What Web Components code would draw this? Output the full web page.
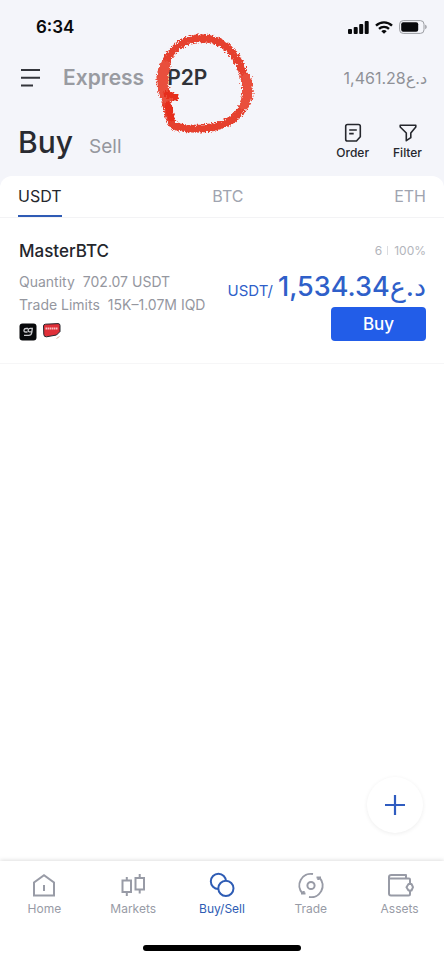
<!DOCTYPE html>
<html lang="en">
<head>
<meta charset="utf-8">
<meta name="viewport" content="width=device-width, initial-scale=1">
<title>P2P</title>
<style>
  body { margin: 0; background: #fff; font-family: Inter, "Liberation Sans", "DejaVu Sans", sans-serif; color: #24262c; }
</style>
</head>
<body>
<p2p-app></p2p-app>
<script>
const base = `<style>
*{box-sizing:border-box}
button,a{font:inherit;color:inherit;background:none;border:0;padding:0;margin:0;text-decoration:none;cursor:pointer;white-space:nowrap}
svg{display:block;fill:none;stroke:currentColor}
</style>`;
function define(name, html) {
  const t = document.createElement('template');
  t.innerHTML = base + html;
  customElements.define(name, class extends HTMLElement {
    constructor() {
      super();
      this.attachShadow({ mode: 'open' }).appendChild(t.content.cloneNode(true));
    }
  });
}

define('status-bar', `<style>
:host{display:flex;justify-content:space-between;align-items:center;height:54px;padding:0 17px 0 36px;color:#08090b}
time{font-size:17px;font-weight:600;line-height:24px}
div{display:flex;align-items:center;gap:6px}
</style>
<time>6:34</time>
<div>
<svg width="21" height="13" viewBox="0 0 21 13" style="fill:currentColor;stroke:none" aria-hidden="true"><rect x="0" y="8" width="4" height="5" rx="1"/><rect x="5.7" y="6" width="4" height="7" rx="1"/><rect x="11.2" y="3" width="4" height="10" rx="1"/><rect x="16.7" y="0" width="4" height="13" rx="1"/></svg>
<svg width="18" height="13" viewBox="0 0 18 13" stroke-width="2.3" aria-hidden="true"><path d="M1 4.6a11.4 11.4 0 0 1 16 0M4 7.9a7.2 7.2 0 0 1 10 0"/><path d="M9 12.8 6.3 10.2a4 4 0 0 1 5.4 0z" fill="currentColor" stroke="none"/></svg>
<svg width="28" height="14" viewBox="0 0 28 14" aria-hidden="true"><rect x=".6" y=".6" width="24.4" height="12.8" rx="3.6" stroke="#9b9da2"/><rect x="2.2" y="2.2" width="17" height="9.6" rx="2" fill="currentColor" stroke="none"/><path d="M26.300 4.800c1.700.6 1.700 3.800 0 4.400z" fill="#8b8d92" stroke="none"/></svg>
</div>`);

define('hand-circle', `<style>
:host{position:absolute;left:-18px;top:-35px;width:100px;height:106px;pointer-events:none}
</style>
<svg width="100" height="106" viewBox="150 29 100 106" style="overflow:visible" aria-hidden="true">
<defs><filter id="crayon" x="-20%" y="-20%" width="140%" height="140%"><feTurbulence type="fractalNoise" baseFrequency=".55" numOctaves="2" seed="4" result="n"/><feDisplacementMap in="SourceGraphic" in2="n" scale="6" xChannelSelector="R" yChannelSelector="G"/><feGaussianBlur stdDeviation=".5"/></filter></defs>
<g filter="url(#crayon)" stroke-linecap="round" stroke-linejoin="round">
<path d="M220 42C206 36 186 36 174 51C161 66 159 82 164 94C169 105 168 118 175 126C190 130 211 130 227 123C244 115 250 99 246 80C243 65 234 49 220 42" stroke="#e5412f" stroke-width="8"/>
<path d="M166 66C162 77 163 88 168 98" stroke="#e9503c" stroke-width="11"/>
<path d="M168 94L176 97M169 105L172 118" stroke="#e62e1b" stroke-width="7"/>
<path d="M247 78C250 90 249 99 245 105" stroke="#e9503c" stroke-width="10"/>
</g></svg>`);

define('top-nav', `<style>
:host{display:flex;align-items:center;height:48px;padding:0 17px 0 21px}
.menu{width:20px;margin-right:22px;color:#33353b}
nav{display:flex;gap:23px;font-size:21px;font-weight:600;line-height:28px;color:#999ba1}
.on{position:relative;color:#303238}
.bal{margin-left:auto;font-size:16px;line-height:24px;color:#8f9197}
</style>
<button class="menu" aria-label="Menu"><svg width="20" height="18" viewBox="0 0 20 18" stroke-width="2"><path d="M0 1h19M0 8.700h19M0 16.500h12"/></svg></button>
<nav><button>Express</button><button class="on">P2P<hand-circle></hand-circle></button></nav>
<bdi class="bal" dir="ltr">د.ع1,461.28</bdi>`);

define('side-switch', `<style>
:host{display:flex;align-items:center;height:74px;padding:5px 22px 0 18px}
.side{display:flex;align-items:baseline;gap:16px;flex:1}
.buy{font-size:30px;line-height:40px;font-weight:500;color:#292b31}
.sell{font-size:19px;color:#95979e}
.tools{display:flex;gap:24px}
.tools button{display:flex;flex-direction:column;align-items:center;gap:3px;font-size:12px;font-weight:500;line-height:14px;color:#25272d}
</style>
<div class="side"><button class="buy">Buy</button><button class="sell">Sell</button></div>
<div class="tools">
<button><svg width="18" height="20" viewBox="0 0 18 20" stroke-width="1.6" stroke-linejoin="round"><path d="M3.500 1.500h11q1.800 0 1.800 1.800v10.500l-3.800 4.200h-9q-1.800 0-1.800-1.800V3.300q0-1.800 1.800-1.800zM5.200 7h7.600M5.200 10.600h4.500"/></svg>Order</button>
<button><svg width="18" height="20" viewBox="0 0 18 20" stroke-width="1.6" stroke-linejoin="round"><path d="M1.200 2.300h15.600v1.700l-5 6v4.700l-4.500 3V10L1.200 4z"/></svg>Filter</button>
</div>`);

define('coin-tabs', `<style>
:host{display:flex;justify-content:space-between;height:42px;padding:0 18px;background:#fff;border-bottom:1px solid #f3f3f5;border-radius:12px 12px 0 0;font-size:16px;color:#a0a4b0}
button{border-bottom:2px solid transparent;line-height:38px;height:41px}
.on{color:#25272d;border-color:#2f5bb5}
</style>
<button class="on">USDT</button><button>BTC</button><button>ETH</button>`);

define('offer-card', `<style>
:host{display:flex;justify-content:space-between;padding:21px 18px 22px 19px;border-bottom:1px solid #f6f6f7}
h2{margin:0 0 7px;font-size:17px;line-height:24px;font-weight:500;color:#24262c}
p{margin:0;font-size:14px;line-height:23px;color:#95979f;white-space:nowrap}
p span{margin-left:8px}
.pay{display:flex;gap:6px;margin-top:7px}
.right{display:flex;flex-direction:column;align-items:flex-end}
.stat{font-size:12px;line-height:24px;color:#b3b5bc}
.stat i{display:inline-block;width:1px;height:9px;margin:0 6px 0 5px;background:#dcdde1}
.price{display:flex;align-items:baseline;gap:5px;height:44px;line-height:48px;color:#2f5fc9;white-space:nowrap}
.price small{font-size:15px}
.price bdi{font-size:27px;font-weight:500}
.go{width:95px;height:34px;border-radius:4px;background:#225de8;color:#fff;font-size:17px;font-weight:500}
</style>
<section>
<h2><slot name="name"></slot></h2>
<p>Quantity<span><slot name="qty"></slot></span></p>
<p>Trade Limits<span><slot name="limits"></slot></span></p>
<div class="pay">
<svg width="18" height="18" viewBox="0 0 18 18" aria-hidden="true"><rect x=".5" y=".5" width="17" height="17" rx="3" fill="#08090b" stroke="none"/><path d="M9 5.500H7Q5.200 5.500 5 7.200T6.500 9H8.500M13.300 5.300H11.200Q9.400 5.300 9.200 7T10.700 8.800H12.900ZM13.300 5.300 12.700 9.800Q12.200 12.300 9.800 12.300H5" stroke="#c9c9cc" stroke-width="1.300"/></svg>
<svg width="18" height="18" viewBox="0 0 18 18" stroke="none" aria-hidden="true"><path d="M.5 3Q.5 1.300 2.500 1.200L15 .6Q17 .6 17 2.500V8.500L13.500 12 3.500 13.800Q1 14 .8 11.500z" fill="#e02f38"/><path d="M2.500 5.500h12" stroke="#f7c1c4" stroke-width="2" stroke-dasharray="1.600 .5"/><path d="M13.500 15.500 16.500 13.500" stroke="#d9b5a0"/></svg>
</div>
</section>
<div class="right">
<div class="stat"><slot name="orders"></slot><i></i><slot name="rate"></slot></div>
<div class="price"><small>USDT/</small><bdi dir="ltr"><slot name="price"></slot></bdi></div>
<button class="go">Buy</button>
</div>`);

define('add-button', `<style>
:host{display:flex;justify-content:flex-end;padding:0 21px 28px}
button{display:grid;place-items:center;width:56px;height:56px;border-radius:50%;background:#fff;box-shadow:0 1px 4px #00000012;color:#2f5cc0}
</style>
<button aria-label="Add"><svg width="20" height="20" viewBox="0 0 20 20" stroke-width="2.200"><path d="M10 0v20M0 10h20"/></svg></button>`);

define('nav-item', `<style>
:host{flex:1;color:#989ba6}
:host([active]){color:#2e5cb4}
a{display:flex;flex-direction:column;align-items:center;gap:2px;font-size:12px;line-height:16px}
</style><a href="#"><slot name="icon"></slot><slot></slot></a>`);

define('bottom-nav', `<style>
:host{display:block;background:#fff;box-shadow:0 -1px 4px #00000020;padding-bottom:9px}
nav{display:flex;padding-top:10px;height:84px}
.bar{width:158px;height:6px;border-radius:3px;background:#000;margin:0 auto}
svg{stroke-width:2}
</style>
<nav>
<nav-item><svg slot="icon" width="28" height="28" viewBox="0 0 28 28"><path d="M4 24.500V11.500L14 4.200l10 7.300v13zM14 14v6"/></svg>Home</nav-item>
<nav-item><svg slot="icon" width="28" height="28" viewBox="0 0 28 28"><path d="M3.500 9.500h8.500v11.500H3.500zM7.800 6v3.500M7.800 21v4M16.500 7H25v11.500h-8.500zM20.700 3v4M20.700 18.500v4"/></svg>Markets</nav-item>
<nav-item active><svg slot="icon" width="28" height="28" viewBox="0 0 28 28"><circle cx="10.400" cy="10.300" r="7.600"/><circle cx="17.900" cy="17.300" r="7.600" fill="#fff"/></svg>Buy/Sell</nav-item>
<nav-item><svg slot="icon" width="28" height="28" viewBox="0 0 28 28"><circle cx="14" cy="14.500" r="3.600"/><path d="M16 3.100A11.500 11.500 0 0 0 5.500 22.300M12 25.900A11.500 11.500 0 0 0 22.500 6.700M4 22.500H8.500M6.700 20V23M24 6.500H19.500M21.300 9V6"/></svg>Trade</nav-item>
<nav-item><svg slot="icon" width="28" height="28" viewBox="0 0 28 28" stroke-linejoin="round"><path d="M20 7.500V4H5.500Q3 4 3 6V22.500Q3 24.500 5 24.500H22.500Q24 24.500 24 23V19.500M24 13V8.500Q24 7.500 23 7.500H3.500M22.500 13H25.500L27 16.200 25.500 19.500H22.500L20.500 16.200z"/></svg>Assets</nav-item>
</nav>
<div class="bar"></div>`);

define('p2p-app', `<style>
:host{display:flex;flex-direction:column;min-height:100vh}
header{background:#f4f5fa}
main{flex:1;display:flex;flex-direction:column}
add-button{margin-top:auto}
</style>
<header><status-bar></status-bar><top-nav></top-nav><side-switch></side-switch><coin-tabs></coin-tabs></header>
<main>
<offer-card><span slot="name">MasterBTC</span><span slot="qty">702.07 USDT</span><span slot="limits">15K–1.07M IQD</span><span slot="orders">6</span><span slot="rate">100%</span><span slot="price">د.ع1,534.34</span></offer-card>
<add-button></add-button>
</main>
<bottom-nav></bottom-nav>`);
</script>
</body>
</html>
